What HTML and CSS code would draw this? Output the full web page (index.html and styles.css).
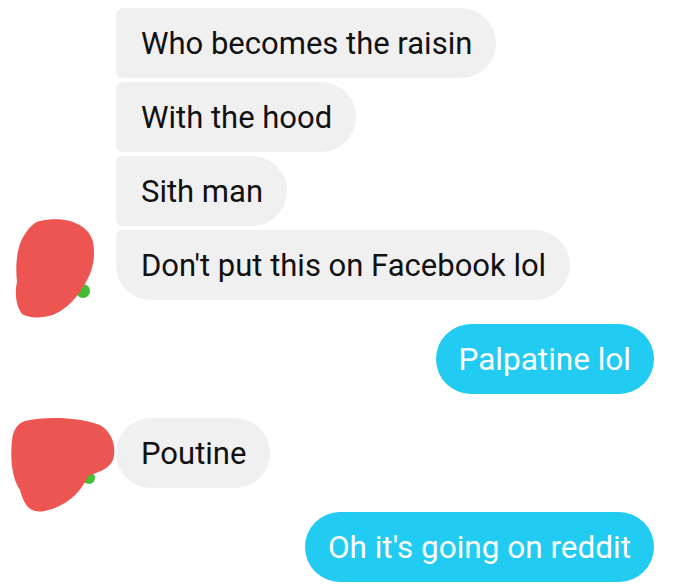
FILE: index.html
```html
<!DOCTYPE html>
<html>
    <head>
        <meta charset="UTF-8">
        <title>Chat</title>

        <link rel="stylesheet" href="styles.css">
    </head>

    <body>

        <div class="chat">

            <div class="group in">
                <div class="avatar">
                    <svg class="face one" width="116" height="104" viewBox="0 214 116 104">
                        <circle cx="83" cy="291" r="7" fill="#45bd33"/>
                        <path d="M 40 221 C 62 216, 88 222, 93 242 C 96 258, 92 272, 86 282 C 80 292, 72 306, 55 314 C 45 318, 30 319, 22 314 C 15 305, 15 290, 17 282 C 15 265, 17 245, 25 234 C 30 226, 35 222, 40 221 Z" fill="#ec5552"/>
                    </svg>
                </div>
                <div class="stack">
                    <div class="bubble grey first">Who becomes the raisin</div>
                    <div class="bubble grey mid">With the hood</div>
                    <div class="bubble grey mid">Sith man</div>
                    <div class="bubble grey last">Don't put this on Facebook lol</div>
                </div>
            </div>

            <div class="group out">
                <div class="bubble blue">Palpatine lol</div>
            </div>

            <div class="group in">
                <div class="avatar">
                    <svg class="face two" width="116" height="100" viewBox="0 412 116 100">
                        <ellipse cx="58" cy="421" rx="10" ry="3" fill="#b9dcea"/>
                        <circle cx="89" cy="478" r="6" fill="#45bd33"/>
                        <path d="M 25 421 C 45 416, 80 417, 100 425 C 112 432, 117 447, 113 460 C 108 470, 98 472, 88 476 C 82 490, 70 505, 45 511 C 30 514, 24 505, 20 490 C 12 478, 10 460, 12 440 C 13 430, 18 423, 25 421 Z" fill="#ec5552"/>
                    </svg>
                </div>
                <div class="stack">
                    <div class="bubble grey single">Poutine</div>
                </div>
            </div>

            <div class="group out">
                <div class="bubble blue">Oh it's going on reddit</div>
            </div>

        </div>

    </body>
</html>
```

FILE: styles.css
```css
body {
    margin: 0;
    background-color: #ffffff;
    font-family: Roboto, "Noto Sans", Arial, sans-serif;
}

.chat {
    display: flex;
    flex-direction: column;
    gap: 24px;
    padding-top: 8px;
}

.group {
    display: flex;
}

.group.in {
    align-items: flex-end;
}

.group.out {
    justify-content: flex-end;
    padding-right: 46px;
}

.avatar {
    width: 116px;
    flex-shrink: 0;
}

.face {
    display: block;
}

.face.one {
    margin-bottom: -18px;
}

.face.two {
    margin-top: -6px;
    margin-bottom: -24px;
}

.stack {
    display: flex;
    flex-direction: column;
    align-items: flex-start;
    gap: 4px;
}

.bubble {
    height: 70px;
    display: flex;
    align-items: center;
    padding: 0 24px 0 25px;
    font-size: 31px;
    border-radius: 35px;
    white-space: nowrap;
    box-sizing: border-box;
}

.grey {
    background-color: #f0f0f0;
    color: #111111;
}

.blue {
    background-color: #22cbf2;
    color: #ffffff;
    font-size: 31.5px;
    padding: 0 23px;
}

.first {
    border-radius: 8px 35px 35px 6px;
}

.mid {
    border-radius: 6px 35px 35px 6px;
}

.last {
    border-radius: 6px 35px 35px 35px;
}
```
